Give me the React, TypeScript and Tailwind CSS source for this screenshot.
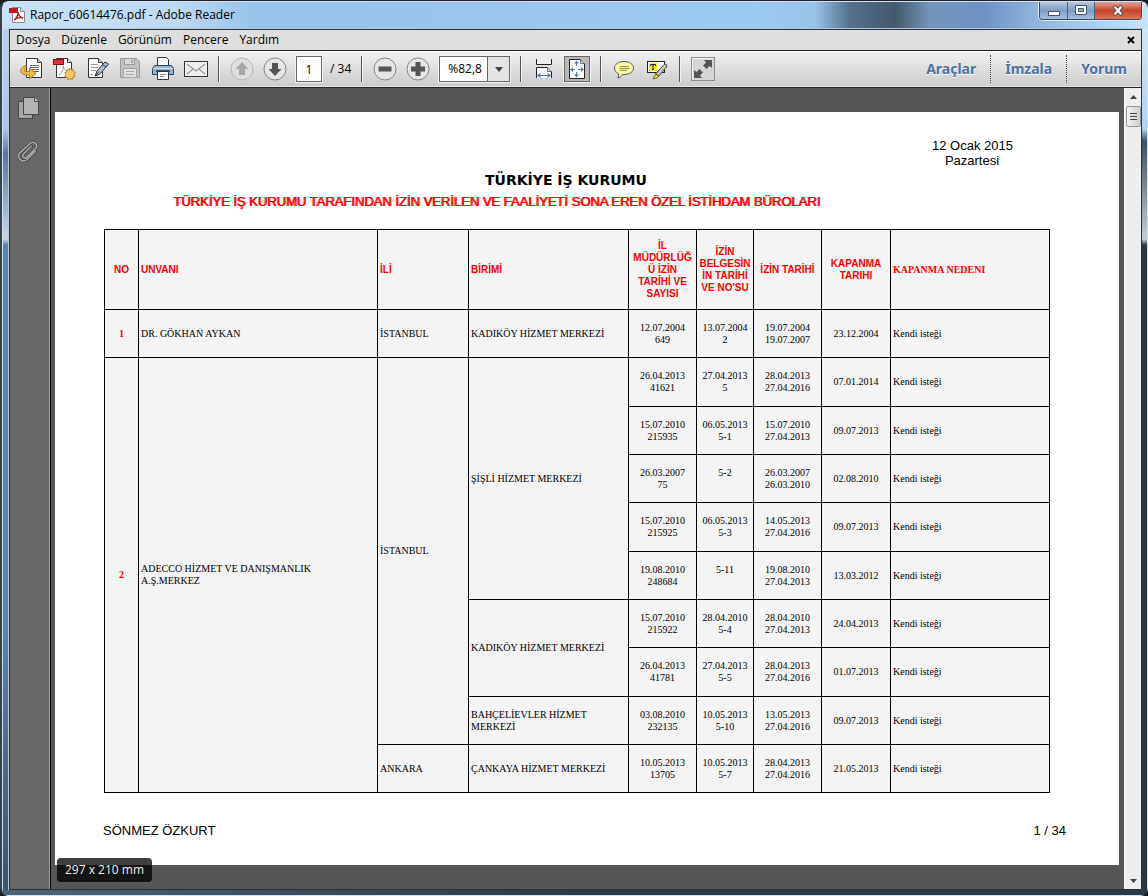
import type { ReactNode } from 'react';

interface Permit {
  directorate: [string, string];
  certificate: [string, string];
  period: [string, string];
  closed: string;
}

interface Unit {
  name: string;
  permits: Permit[];
}

interface Province {
  name: string;
  units: Unit[];
}

interface Company {
  no: number;
  title: string;
  provinces: Province[];
}

const permit = (
  directorate: [string, string],
  certificate: [string, string],
  period: [string, string],
  closed: string
): Permit => ({ directorate, certificate, period, closed });

const companies: Company[] = [
  {
    no: 1,
    title: 'DR. GÖKHAN AYKAN',
    provinces: [
      {
        name: 'İSTANBUL',
        units: [
          {
            name: 'KADIKÖY HİZMET MERKEZİ',
            permits: [
              permit(['12.07.2004', '649'], ['13.07.2004', '2'], ['19.07.2004', '19.07.2007'], '23.12.2004'),
            ],
          },
        ],
      },
    ],
  },
  {
    no: 2,
    title: 'ADECCO HİZMET VE DANIŞMANLIK\nA.Ş.MERKEZ',
    provinces: [
      {
        name: 'İSTANBUL',
        units: [
          {
            name: 'ŞİŞLİ HİZMET MERKEZİ',
            permits: [
              permit(['26.04.2013', '41621'], ['27.04.2013', '5'], ['28.04.2013', '27.04.2016'], '07.01.2014'),
              permit(['15.07.2010', '215935'], ['06.05.2013', '5-1'], ['15.07.2010', '27.04.2013'], '09.07.2013'),
              permit(['26.03.2007', '75'], ['5-2', ''], ['26.03.2007', '26.03.2010'], '02.08.2010'),
              permit(['15.07.2010', '215925'], ['06.05.2013', '5-3'], ['14.05.2013', '27.04.2016'], '09.07.2013'),
              permit(['19.08.2010', '248684'], ['5-11', ''], ['19.08.2010', '27.04.2013'], '13.03.2012'),
            ],
          },
          {
            name: 'KADIKÖY HİZMET MERKEZİ',
            permits: [
              permit(['15.07.2010', '215922'], ['28.04.2010', '5-4'], ['28.04.2010', '27.04.2013'], '24.04.2013'),
              permit(['26.04.2013', '41781'], ['27.04.2013', '5-5'], ['28.04.2013', '27.04.2016'], '01.07.2013'),
            ],
          },
          {
            name: 'BAHÇELİEVLER HİZMET\nMERKEZİ',
            permits: [
              permit(['03.08.2010', '232135'], ['10.05.2013', '5-10'], ['13.05.2013', '27.04.2016'], '09.07.2013'),
            ],
          },
        ],
      },
      {
        name: 'ANKARA',
        units: [
          {
            name: 'ÇANKAYA HİZMET MERKEZİ',
            permits: [
              permit(['10.05.2013', '13705'], ['10.05.2013', '5-7'], ['28.04.2013', '27.04.2016'], '21.05.2013'),
            ],
          },
        ],
      },
    ],
  },
];

const menus = ['Dosya', 'Düzenle', 'Görünüm', 'Pencere', 'Yardım'];
const panels = ['Araçlar', 'İmzala', 'Yorum'];

function Svg({ children, size = 24 }: { children: ReactNode; size?: number }) {
  return (
    <svg width={size} height={size} viewBox={`0 0 ${size} ${size}`} fill="none" aria-hidden="true">
      {children}
    </svg>
  );
}

const ReaderLogo = () => (
  <Svg size={16}>
    <path d="M3.500 .5h8l4 4v11h-12z" fill="#fff" stroke="#8a8a8a" />
    <path d="M11.500 .5v4h4" fill="#ddd" stroke="#8a8a8a" />
    <path d="M0 1h9v5H0z" fill="#c01822" />
    <path d="M5 13c3-2 4-5 4-8 0 4 2 5 5 6-4-1-6 0-9 2z" stroke="#b5121b" strokeWidth="1.300" />
  </Svg>
);

const OpenIcon = () => (
  <Svg>
    <path d="M7.500 1.500h11l4 4v15h-15z" fill="#fff" stroke="#333" />
    <path d="M18.500 1.500v4h4" fill="#ddd" stroke="#333" />
    <path d="M11 8.500h9M11 10.500h9M11 12.500h9M13 14.500h7" stroke="#2f78c9" />
    <path
      d="M7 8.500c-4 1-7 5-4.500 7.500 2 2 5.500 2 8 2v4l6.500-5.500-6.500-5.500v3.500c-2 0-4.500 0-5-1-.5-1.500.5-3 2-4z"
      fill="#efb944"
      stroke="#a06a10"
      strokeWidth=".8"
    />
  </Svg>
);

const CreateIcon = () => (
  <Svg>
    <path d="M4.500 1.500h11l4 4v15h-15z" fill="#fff" stroke="#333" />
    <path d="M15.500 1.500v4h4" fill="#ddd" stroke="#333" />
    <path d="M7.500 18c3-3 4-6 4-9 0 3 1 4 4 5" stroke="#999" />
    <rect x="1.500" y="2.500" width="10" height="5" fill="#e0303a" stroke="#8f0d14" />
    <path
      d="M17.500 11l1.300 2 2.300-.9.100 2.500 2.300.9-1.400 1.900 1.100 2.100-2.300.7-.5 2.300-2.200-.8-2.200 1.100-.9-2.200-2.300-.7.900-2.200-1-2 2.200-1 .4-2.300 2.200.5z"
      fill="#f6c566"
      stroke="#a8731d"
      strokeWidth=".8"
    />
  </Svg>
);

const SignIcon = () => (
  <Svg>
    <path d="M3.500 1.500h10l4 4v15h-14z" fill="#fff" stroke="#333" />
    <path d="M13.500 1.500v4h4" fill="#ddd" stroke="#333" />
    <path d="M6 7.500h6M6 10.500h7M6 13.500h5M6 17.500h2" stroke="#999" />
    <path d="M10 19l2-5 8-9 3.500 2-8.500 10z" fill="#a9c2d8" stroke="#333" />
    <path d="M10 19l4-4.500M18 8l3 2" stroke="#333" />
  </Svg>
);

const SaveIcon = () => (
  <Svg>
    <path d="M2.500 1.500h16l3 3v16h-19z" fill="#c2c2c2" stroke="#9a9a9a" />
    <path d="M6.500 1.500h10v6h-10z" fill="#dadada" stroke="#9a9a9a" />
    <path d="M13 3h2v3h-2z" fill="#a5a5a5" />
    <path d="M5.500 11.500h13v9h-13z" fill="#e2e2e2" stroke="#a5a5a5" />
    <path d="M8 14.500h8M8 17.500h8" stroke="#a5a5a5" />
  </Svg>
);

const PrintIcon = () => (
  <Svg>
    <path d="M6.500 9V.5h9l2 2V9" fill="#fff" stroke="#333" />
    <path d="M3.500 8.500h17l2 3v6h-21v-6z" fill="#90b4d4" stroke="#2f4355" />
    <path d="M2 11.500h20" stroke="#cbe0f1" />
    <path d="M5 13h14v2H5z" fill="#445462" />
    <path d="M6.500 14.500h11v8h-11z" fill="#fff" stroke="#333" />
    <path d="M9 17.500h6M9 19.500h4" stroke="#888" />
  </Svg>
);

const MailIcon = () => (
  <Svg>
    <rect x=".5" y="4.500" width="23" height="15" fill="#eee" stroke="#333" />
    <path d="M3 7l9 7 9-7M3 17l6-5M21 17l-6-5" stroke="#999" strokeWidth="1.200" />
  </Svg>
);

function RoundIcon({ d, faded }: { d: string; faded?: boolean }) {
  return (
    <Svg>
      <circle cx="12" cy="12" r="11" fill={faded ? '#dedede' : '#e6e6e6'} stroke={faded ? '#b5b5b5' : '#858585'} />
      <path d={d} fill={faded ? '#a8a8a8' : '#555'} />
    </Svg>
  );
}

const FitWidthIcon = () => (
  <Svg>
    <path d="M4.500 2v5.500h15V2" fill="#eee" stroke="#222" />
    <path d="M4.500 21V10.500h11l4 4V21" fill="#fff" stroke="#222" />
    <path d="M15.500 10.500v4h4" fill="#ddd" stroke="#777" />
    <path d="M6 18.500h12" stroke="#5b78b8" />
    <path d="M8.500 16v5l-4-2.500zM15.500 16v5l4-2.500z" fill="#5b78b8" />
  </Svg>
);

const FitPageIcon = () => (
  <Svg>
    <path d="M4.500 2.500h11l4 4v15h-15z" fill="#fff" stroke="#222" />
    <path d="M15.500 2.500v4h4" fill="#ddd" stroke="#777" />
    <path d="M11.500 5v4M11.500 15v4M6 12.500h4M13 12.500h5" stroke="#5b78b8" />
    <path d="M9 6.500h5l-2.500-3zM9 17.500h5l-2.500 3zM8 10v5l-3-2.500zM16 10v5l3-2.500z" fill="#5b78b8" />
  </Svg>
);

const CommentIcon = () => (
  <Svg>
    <path
      d="M12 4.500c5.500 0 9.500 2.800 9.500 6.500s-4 6.500-9.500 6.500h-1.500c-1 2-3 3.200-5 3.500 1-1 1.500-2.500 1-4.300-2.500-1.200-4-3.300-4-5.700 0-3.700 4-6.500 9.500-6.500z"
      fill="#fdf8a5"
      stroke="#555"
    />
    <path d="M8 9.500h8.500M7.500 11.500h10M8 13.500h7" stroke="#8f8a4e" />
  </Svg>
);

const HighlightIcon = () => (
  <Svg>
    <rect x="2.500" y="4.500" width="17" height="11" fill="#fff" stroke="#222" />
    <path d="M4 6h8v8H4z" fill="#f5ea1d" />
    <path d="M5.500 9V7.500h5V9M8 7.500v5M7 12.500h2" stroke="#222" />
    <path d="M10.500 17l8.500-9.500c2-1 3.500.5 2.500 2.500L14 19z" fill="#c4c4c4" stroke="#444" />
    <path d="M10.500 17l3.500 2-2 2-4 1z" fill="#e6d42a" stroke="#5d5611" strokeWidth=".8" />
  </Svg>
);

const ExpandIcon = () => (
  <Svg>
    <rect x=".5" y=".5" width="23" height="23" fill="#d6d6d6" stroke="#8d8d8d" />
    <path d="M1.500 22V1.500H22" stroke="#f4f4f4" />
    <path d="M13 3h8v8l-2.500-2-3 3-3.500-3.500 3-3z" fill="#555" />
    <path d="M3 13l2.500 2 3-3 3.500 3.500-3 3 2 2.500H3z" fill="#555" />
  </Svg>
);

const PagesIcon = () => (
  <Svg>
    <path d="M.5 5.500h14v17H.5z" fill="#a5a5a5" stroke="#454545" />
    <path d="M5.500 1.500h11l4 4v13h-15z" fill="#b4b4b4" stroke="#454545" />
    <path d="M16.500 1.500v4h4" fill="#d5d5d5" stroke="#454545" />
  </Svg>
);

const clipPath = 'M15 6.500L6.500 15a2.500 2.500 0 0 0 3.500 3.500L20 8.500a4 4 0 0 0-5.500-5.500L3 13.500a5.200 5.200 0 0 0 7.300 7.300L19 12';

const ClipIcon = () => (
  <Svg>
    <g transform="translate(-1 0) scale(.95)" strokeLinecap="round">
      <path d={clipPath} stroke="#444" strokeWidth="3.200" />
      <path d={clipPath} stroke="#aaa" strokeWidth="1.600" />
    </g>
  </Svg>
);

function ToolButton({ label, disabled, children }: { label: string; disabled?: boolean; children: ReactNode }) {
  return (
    <button type="button" aria-label={label} disabled={disabled} className="size-6 shrink-0">
      {children}
    </button>
  );
}

const Separator = () => <div className="mr-[11px] ml-2.5 h-[26px] w-px shrink-0 bg-[#555] shadow-[1px_0_0_#f4f4f4]" />;

function TitleBar() {
  return (
    <header className="flex h-[27px] shrink-0 items-start overflow-hidden bg-[linear-gradient(90deg,#c9e2f7_0%,#bddaf3_15%,#98c3ea_22%,#9bcaf2_66%,#98c4e8_71%,#54708c_74%,#43586c_78%,#7594ba_81%,#6f93c6_86%,#8fb3dc_90%,#a9d3f5_96%,#c6e2fa_100%)]">
      <div className="flex h-full items-center gap-[5px] pb-px pl-1.5">
        <ReaderLogo />
        <h1 className="text-[12px] leading-4 text-black">Rapor_60614476.pdf - Adobe Reader</h1>
      </div>
      <div className="mr-[5px] ml-auto flex h-[18px] overflow-hidden rounded-b border border-t-0 border-[#3d4a5c] shadow-[0_0_0_1px_#dcebf8]">
        <button
          type="button"
          aria-label="Simge durumuna küçült"
          className="flex w-7 justify-center border-r border-[#4d5f78] bg-linear-to-b from-[#b9c9e0] via-[#7e9cc4] to-[#a5c0e2]"
        >
          <Svg size={18}>
            <rect x="3.500" y="9.500" width="11" height="4" fill="#fff" stroke="#4a5468" />
          </Svg>
        </button>
        <button
          type="button"
          aria-label="Ekranı kapla"
          className="flex w-[27px] justify-center border-r border-[#4d5f78] bg-linear-to-b from-[#b9c9e0] via-[#7e9cc4] to-[#a5c0e2]"
        >
          <Svg size={18}>
            <path d="M3.500 3.500h11v9h-11z" fill="#fff" stroke="#4a5468" />
            <path d="M6.500 6.500h5v3h-5z" fill="#8fa9cd" stroke="#4a5468" />
          </Svg>
        </button>
        <button
          type="button"
          aria-label="Kapat"
          className="flex w-[46px] justify-center bg-linear-to-b from-[#e0a396] via-[#c6432b] to-[#d9765a]"
        >
          <Svg size={18}>
            <path d="M5 4l8 9M13 4l-8 9" stroke="#4b3940" strokeWidth="4" />
            <path d="M5.500 4.500l7 8M12.500 4.500l-7 8" stroke="#fff" strokeWidth="2.400" />
          </Svg>
        </button>
      </div>
    </header>
  );
}

function MenuBar() {
  return (
    <nav className="flex h-5 shrink-0 items-center gap-[11px] bg-[#dedede] px-1.5 text-[12px] leading-4 text-black">
      {menus.map((menu) => (
        <button key={menu} type="button">
          {menu}
        </button>
      ))}
      <button type="button" aria-label="Belgeyi kapat" className="ml-auto">
        <svg width="8" height="8" viewBox="0 0 8 8" aria-hidden="true">
          <path d="M1 1l6 6M7 1L1 7" stroke="#000" strokeWidth="2" />
        </svg>
      </button>
    </nav>
  );
}

function Toolbar() {
  return (
    <div className="flex h-[38px] shrink-0 items-center border-y border-[#222] bg-linear-to-b from-[#f2f2f2] to-[#cbcbcb] pl-[9px] text-[12px] text-black shadow-[inset_0_1px_0_#fff,inset_0_-1px_0_#e8e8e8]">
      <div className="flex gap-[9px]">
        <ToolButton label="Aç"><OpenIcon /></ToolButton>
        <ToolButton label="PDF oluştur"><CreateIcon /></ToolButton>
        <ToolButton label="İmzala"><SignIcon /></ToolButton>
        <ToolButton label="Kaydet" disabled><SaveIcon /></ToolButton>
        <ToolButton label="Yazdır"><PrintIcon /></ToolButton>
        <ToolButton label="E-posta"><MailIcon /></ToolButton>
      </div>
      <Separator />
      <div className="flex items-center gap-[9px]">
        <ToolButton label="Önceki sayfa" disabled>
          <RoundIcon faded d="M12 5l6.500 7H15v6H9v-6H5.500z" />
        </ToolButton>
        <ToolButton label="Sonraki sayfa">
          <RoundIcon d="M12 19l6.500-7H15V6H9v6H5.500z" />
        </ToolButton>
        <label className="flex items-center gap-2">
          <input
            aria-label="Sayfa"
            defaultValue="1"
            className="h-[26px] w-[26px] border border-[#666] bg-white text-center outline-1 outline-[#f4f4f4]"
          />
          <span>/ 34</span>
        </label>
      </div>
      <Separator />
      <div className="flex items-center gap-[9px]">
        <ToolButton label="Uzaklaştır"><RoundIcon d="M5.500 9.500h13v5h-13z" /></ToolButton>
        <ToolButton label="Yakınlaştır">
          <RoundIcon d="M9.500 5h5v4.500H19v5h-4.500V19h-5v-4.500H5v-5h4.500z" />
        </ToolButton>
        <div className="relative h-[26px] w-[71px] outline-1 outline-[#f4f4f4]">
          <select aria-label="Yakınlaştırma" className="size-full appearance-none border border-[#666] bg-white pl-2">
            <option>%82,8</option>
          </select>
          <span className="pointer-events-none absolute inset-y-px right-px flex w-[22px] items-center justify-center border-l border-[#666] bg-[#e4e4e4]">
            <svg width="8" height="5" viewBox="0 0 8 5" aria-hidden="true">
              <path d="M0 0h8L4 5z" fill="#444" />
            </svg>
          </span>
        </div>
      </div>
      <Separator />
      <div className="flex items-center gap-2">
        <ToolButton label="Genişliğe sığdır"><FitWidthIcon /></ToolButton>
        <button
          type="button"
          aria-label="Sayfayı sığdır"
          aria-pressed="true"
          className="flex size-[26px] items-center justify-center border border-[#666] bg-[#b9b9b9] outline-1 outline-[#f4f4f4]"
        >
          <FitPageIcon />
        </button>
      </div>
      <Separator />
      <div className="flex gap-[9px]">
        <ToolButton label="Not ekle"><CommentIcon /></ToolButton>
        <ToolButton label="Metni vurgula"><HighlightIcon /></ToolButton>
      </div>
      <Separator />
      <ToolButton label="Okuma modu"><ExpandIcon /></ToolButton>

      <div className="ml-auto flex divide-x divide-dotted divide-[#444] font-['Noto_Sans',sans-serif]">
        {panels.map((panel) => (
          <button
            key={panel}
            type="button"
            className="h-7 px-[14px] pb-0.5 text-[14px] font-bold text-[#4f71a0] [text-shadow:0_1px_0_#fff]"
          >
            {panel}
          </button>
        ))}
      </div>
    </div>
  );
}

const Lines = ({ pair }: { pair: [string, string] }) => (
  <>
    {pair[0]}
    <br />
    {pair[1] || '\u00a0'}
  </>
);

// Flattens the company > province > unit tree into rows, the first row of each group carries its rowSpan cell
function companyRows(company: Company) {
  const count = (units: Unit[]) => units.reduce((sum, unit) => sum + unit.permits.length, 0);
  const total = company.provinces.reduce((sum, province) => sum + count(province.units), 0);

  return company.provinces.flatMap((province, p) =>
    province.units.flatMap((unit, u) =>
      unit.permits.map((row, i) => (
        <tr key={`${company.no}-${p}-${u}-${i}`} className="h-12 nth-[3n+2]:h-[49px]">
          {p + u + i === 0 && (
            <>
              <td rowSpan={total} className="text-center font-bold text-[#f00]">
                {company.no}
              </td>
              <td rowSpan={total} className="whitespace-pre-line">
                {company.title}
              </td>
            </>
          )}
          {u + i === 0 && <td rowSpan={count(province.units)}>{province.name}</td>}
          {i === 0 && (
            <td rowSpan={unit.permits.length} className="whitespace-pre-line">
              {unit.name}
            </td>
          )}
          <td className="text-center"><Lines pair={row.directorate} /></td>
          <td className="text-center"><Lines pair={row.certificate} /></td>
          <td className="text-center"><Lines pair={row.period} /></td>
          <td className="text-center">{row.closed}</td>
          <td>Kendi isteği</td>
        </tr>
      ))
    )
  );
}

function ReportTable() {
  return (
    <table className="w-full table-fixed border-collapse bg-[#f4f4f4] font-['Liberation_Serif',serif] text-[10px] leading-3 text-black [&_td]:border [&_td]:border-black [&_td]:px-0.5 [&_th]:border [&_th]:border-black [&_th]:px-0.5">
      <colgroup>
        <col className="w-[34px]" />
        <col />
        <col className="w-[91px]" />
        <col className="w-[160px]" />
        <col className="w-[68px]" />
        <col className="w-[57px]" />
        <col className="w-[68px]" />
        <col className="w-[69px]" />
        <col className="w-[159px]" />
      </colgroup>
      <thead className="font-['Liberation_Sans',sans-serif] text-[#f00]">
        <tr className="h-20">
          <th>NO</th>
          <th className="text-left">UNVANI</th>
          <th className="text-left">İLİ</th>
          <th className="text-left">BİRİMİ</th>
          <th>
            İL
            <br />
            MÜDÜRLÜĞ
            <br />
            Ü İZİN
            <br />
            TARİHİ VE
            <br />
            SAYISI
          </th>
          <th>
            İZİN
            <br />
            BELGESİN
            <br />
            İN TARİHİ
            <br />
            VE NO'SU
          </th>
          <th className="whitespace-nowrap">İZİN TARİHİ</th>
          <th>
            KAPANMA
            <br />
            TARIHI
          </th>
          <th className="text-left font-['Liberation_Serif',serif]">KAPANMA NEDENI</th>
        </tr>
      </thead>
      <tbody>{companies.map(companyRows)}</tbody>
    </table>
  );
}

function ReportPage() {
  return (
    <article className="mt-6 mr-[5px] ml-1 bg-white pt-[26px] pb-6 font-['Liberation_Sans',sans-serif] text-[13px] text-black">
      <p className="mr-[107px] ml-auto w-20 text-center leading-[15px] whitespace-nowrap">
        12 Ocak 2015
        <br />
        Pazartesi
      </p>
      <h2 className="mt-0.5 ml-[430px] font-['DejaVu_Sans',sans-serif] text-[14px] leading-5 font-bold">
        TÜRKİYE İŞ KURUMU
      </h2>
      <h3 className="mt-0.5 ml-[118px] text-[13px] leading-5 font-normal whitespace-nowrap text-[#f00] [text-shadow:1px_0_0_#f00]">
        TÜRKİYE İŞ KURUMU TARAFINDAN İZİN VERİLEN VE FAALİYETİ SONA EREN ÖZEL İSTİHDAM BÜROLARI
      </h3>
      <div className="mt-[17px] mr-[69px] ml-[49px]">
        <ReportTable />
      </div>
      <footer className="mt-7 mr-[53px] ml-12 flex justify-between leading-5">
        <span>SÖNMEZ ÖZKURT</span>
        <span>1 / 34</span>
      </footer>
    </article>
  );
}

function ScrollBar() {
  return (
    <div className="flex w-[17px] shrink-0 flex-col items-center border-l border-[#fafafa] bg-[#eee]">
      <button type="button" aria-label="Yukarı kaydır" className="flex h-[18px] w-full items-center justify-center">
        <svg width="7" height="4" viewBox="0 0 7 4" aria-hidden="true">
          <path d="M0 4h7L3.500 0z" fill="#444" />
        </svg>
      </button>
      <div className="flex h-[21px] w-[15px] flex-col items-center justify-center gap-0.5 rounded-xs border border-[#979797] bg-linear-to-r from-[#f5f5f5] to-[#cfcfcf]">
        <span className="h-px w-[7px] bg-[#444]" />
        <span className="h-px w-[7px] bg-[#444]" />
        <span className="h-px w-[7px] bg-[#444]" />
      </div>
      <button type="button" aria-label="Aşağı kaydır" className="mt-auto flex h-[17px] w-full items-center justify-center">
        <svg width="7" height="4" viewBox="0 0 7 4" aria-hidden="true">
          <path d="M0 0h7L3.500 4z" fill="#444" />
        </svg>
      </button>
    </div>
  );
}

export default function App() {
  return (
    <div className="h-screen overflow-hidden bg-[#1a2028] font-['Open_Sans',sans-serif]">
      <div className="flex h-full flex-col overflow-hidden rounded-lg border-t border-l-2 border-t-[#1c1f2b] border-l-[#33444f]">
        <div className="flex min-h-0 flex-1 flex-col rounded-t-md rounded-b-sm border border-[#d3e3f0]">
          <TitleBar />
          <div className="flex min-h-0 flex-1">
            <div className="w-1.5 shrink-0 bg-[linear-gradient(180deg,#b4d3f0_0px,#a5c8ea_100px,#56779c_125px,#c8d6e6_210px,#5c82a8_216px,#5c82a8_70%,#3c5468_100%)]" />
            <div className="flex min-w-0 flex-1 flex-col border border-[#2b3138] outline-1 outline-[#b9cbd9]">
              <MenuBar />
              <Toolbar />
              <div className="flex min-h-0 flex-1">
                <aside className="flex w-[41px] shrink-0 flex-col gap-5 border-r border-black bg-[#686868] pt-2 pl-2 shadow-[inset_-1px_0_0_#a0a0a0]">
                  <button type="button" aria-label="Sayfa minyatürleri" className="size-6">
                    <PagesIcon />
                  </button>
                  <button type="button" aria-label="Ekler" className="size-6">
                    <ClipIcon />
                  </button>
                </aside>
                <main className="relative min-w-0 flex-1 overflow-hidden bg-[#565656]">
                  <ReportPage />
                  <div className="absolute bottom-[7px] left-1.5 rounded bg-black/75 px-2 text-[12px] leading-6 text-[#f0f0f0]">
                    297 x 210 mm
                  </div>
                </main>
                <ScrollBar />
              </div>
            </div>
            <div className="w-[5px] shrink-0 bg-[linear-gradient(180deg,#cfe6fb_0px,#b0d2f0_100px,#3b4f60_112px,#c5cdd4_210px,#2a3742_216px,#2a3742_100%)]" />
          </div>
          <div className="h-[5px] shrink-0 bg-linear-to-r from-[#4a6478] via-[#2c3946] to-[#2c3946]" />
        </div>
      </div>
    </div>
  );
}
